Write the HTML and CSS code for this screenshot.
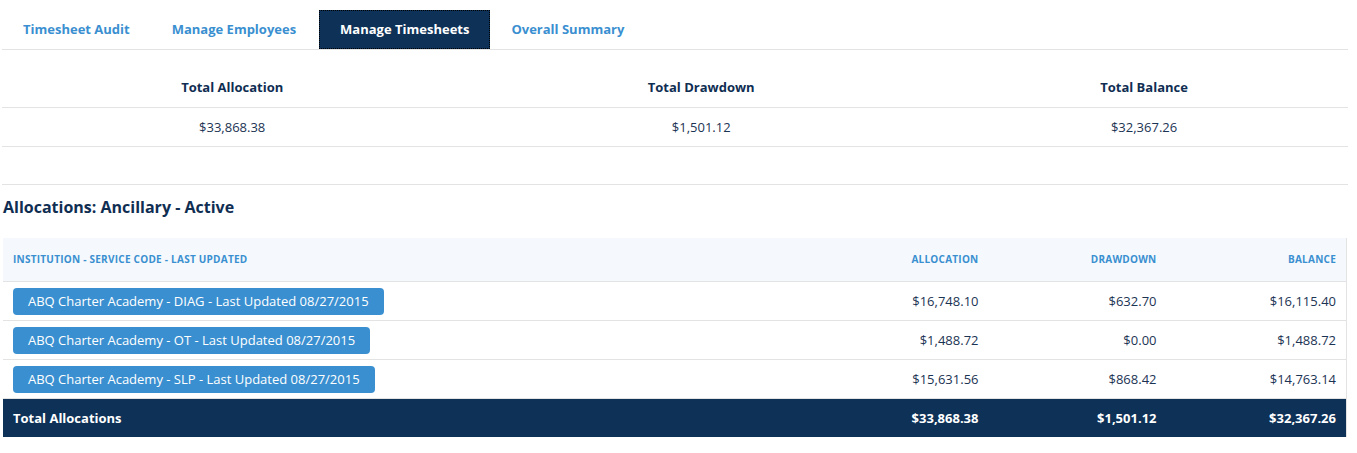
FILE: index.html
```html
<!DOCTYPE html>
<html>
<head>
<meta charset="utf-8">
<link rel="stylesheet" href="styles.css">
</head>
<body>
<div class="page">
  <nav class="tabs">
    <a class="tab">Timesheet Audit</a>
    <a class="tab">Manage Employees</a>
    <a class="tab active">Manage Timesheets</a>
    <a class="tab">Overall Summary</a>
  </nav>

  <table class="summary">
    <thead>
      <tr><th>Total Allocation</th><th>Total Drawdown</th><th>Total Balance</th></tr>
    </thead>
    <tbody>
      <tr><td>$33,868.38</td><td>$1,501.12</td><td>$32,367.26</td></tr>
      <tr class="spacer"><td></td><td></td><td></td></tr>
    </tbody>
  </table>

  <h2 class="section-title">Allocations: Ancillary - Active</h2>

  <table class="alloc">
    <thead>
      <tr>
        <th class="inst">Institution - Service Code - Last Updated</th>
        <th class="num">Allocation</th>
        <th class="num">Drawdown</th>
        <th class="num last">Balance</th>
      </tr>
    </thead>
    <tbody>
      <tr>
        <td><button class="inst-btn">ABQ Charter Academy - DIAG - Last Updated 08/27/2015</button></td>
        <td class="num">$16,748.10</td>
        <td class="num">$632.70</td>
        <td class="num last">$16,115.40</td>
      </tr>
      <tr>
        <td><button class="inst-btn">ABQ Charter Academy - OT - Last Updated 08/27/2015</button></td>
        <td class="num">$1,488.72</td>
        <td class="num">$0.00</td>
        <td class="num last">$1,488.72</td>
      </tr>
      <tr>
        <td><button class="inst-btn">ABQ Charter Academy - SLP - Last Updated 08/27/2015</button></td>
        <td class="num">$15,631.56</td>
        <td class="num">$868.42</td>
        <td class="num last">$14,763.14</td>
      </tr>
    </tbody>
    <tfoot>
      <tr>
        <td>Total Allocations</td>
        <td class="num">$33,868.38</td>
        <td class="num">$1,501.12</td>
        <td class="num last">$32,367.26</td>
      </tr>
    </tfoot>
  </table>
</div>
</body>
</html>
```

FILE: styles.css
```css
* { box-sizing: border-box; }
html, body { margin: 0; padding: 0; background: #fff; }
body {
  font-family: "Open Sans", "Liberation Sans", sans-serif;
  color: #1c3454;
  font-size: 13px;
}
.page {
  width: 1346px;
  margin-left: 2px;
  padding-top: 10px;
}
.tabs {
  display: flex;
  border-bottom: 1px solid #e3e3e3;
  padding-left: 0;
}
.tab {
  display: block;
  height: 39px;
  line-height: 39px;
  padding: 0 21px;
  font-weight: 700;
  font-size: 13px;
  color: #3a8fd0;
  text-decoration: none;
}
.tab.active {
  margin-left: 2px;
  background: #0d3157;
  color: #fff;
  outline: 1px dotted #000;
  outline-offset: -1px;
}
.summary {
  width: 100%;
  border-collapse: collapse;
  margin-top: 18px;
}
.summary th, .summary td {
  text-align: center;
  padding: 0 12px;
  height: 39px;
  border-bottom: 1px solid #e3e3e3;
  color: #1c3454;
  font-size: 13px;
}
.summary th { font-weight: 700; color: #0f2e52; }
.summary td { font-weight: 400; }
.summary .spacer td { height: 38px; }
.section-title {
  margin: 11px 0 0 1px;
  font-size: 16px;
  font-weight: 700;
  color: #0f2e52;
  line-height: 22px;
}
.alloc {
  width: 1344px;
  margin: 20px 0 0 1px;
  border-collapse: collapse;
  border-right: 1px solid #e3e3e3;
}
.alloc th {
  background: #f5f9fd;
  height: 44px;
  font-size: 10px;
  font-weight: 700;
  text-transform: uppercase;
  letter-spacing: 0.25px;
  color: #3a8fd0;
  padding: 0 10px;
  text-align: left;
  border-bottom: 1px solid #e3e3e3;
}
.alloc th.num, .alloc td.num { text-align: right; width: 178px; }
.alloc th.last, .alloc td.last { width: 180px; }
.alloc td {
  height: 39px;
  padding: 0 10px;
  border-bottom: 1px solid #e3e3e3;
  color: #1c3454;
  font-size: 13px;
  white-space: nowrap;
}
.inst-btn {
  font-family: "Open Sans", "Liberation Sans", sans-serif;
  font-size: 13px;
  color: #fff;
  background: #3a8fd0;
  border: none;
  border-radius: 4px;
  height: 27px;
  padding: 0 15px;
  line-height: 27px;
  display: block;
}
.alloc tfoot td {
  background: #0d3157;
  color: #fff;
  font-weight: 700;
  height: 38px;
  border-bottom: none;
}
```
